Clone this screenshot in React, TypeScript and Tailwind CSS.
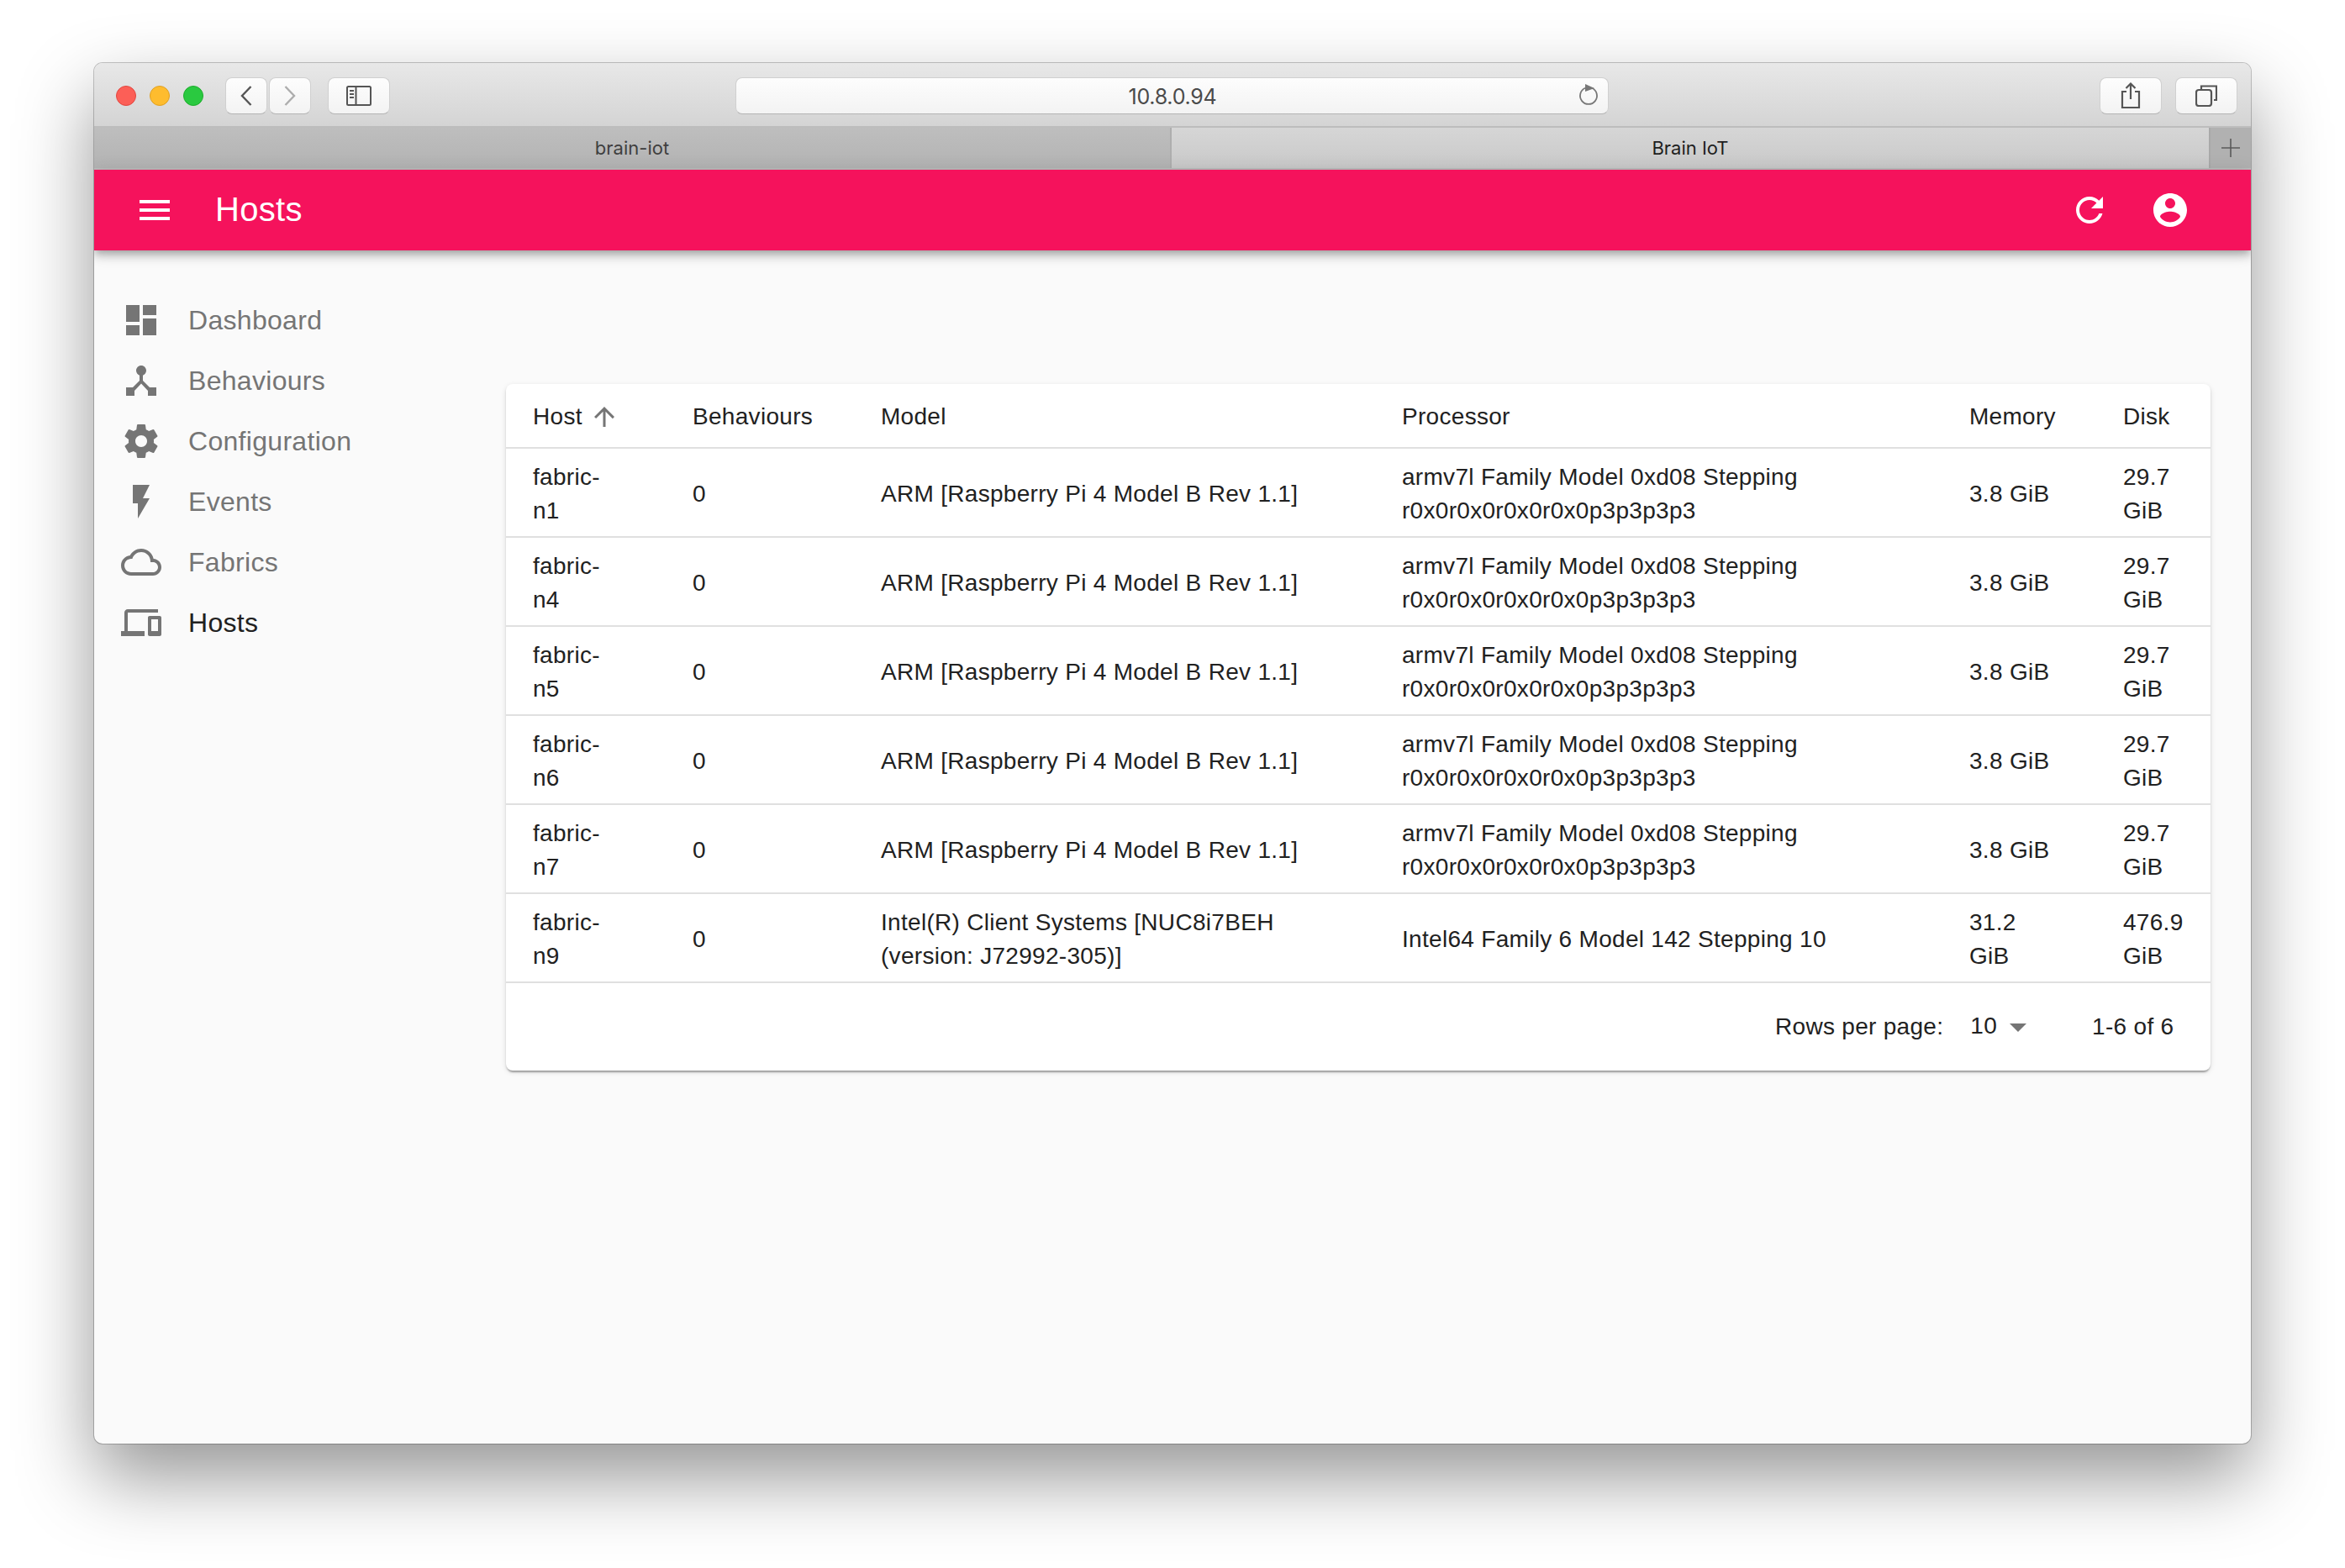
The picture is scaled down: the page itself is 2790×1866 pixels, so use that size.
import React from "react";

const P = {
  dashboard: "M3 13h8V3H3v10zm0 8h8v-6H3v6zm10 0h8V11h-8v10zm0-18v6h8V3h-8z",
  hub: "M17 16l-4-4V8.82C14.16 8.4 15 7.3 15 6c0-1.66-1.34-3-3-3S9 4.34 9 6c0 1.3.84 2.4 2 2.82V12l-4 4H3v5h5v-3.05l4-4.2 4 4.2V21h5v-5h-4z",
  settings: "M19.43 12.98c.04-.32.07-.64.07-.98s-.03-.66-.07-.98l2.11-1.65c.19-.15.24-.42.12-.64l-2-3.46c-.12-.22-.39-.3-.61-.22l-2.49 1c-.52-.4-1.08-.73-1.69-.98l-.38-2.65C14.46 2.18 14.25 2 14 2h-4c-.25 0-.46.18-.49.42l-.38 2.65c-.61.25-1.17.59-1.69.98l-2.49-1c-.23-.09-.49 0-.61.22l-2 3.46c-.13.22-.07.49.12.64l2.11 1.65c-.04.32-.07.65-.07.98s.03.66.07.98l-2.11 1.65c-.19.15-.24.42-.12.64l2 3.46c.12.22.39.3.61.22l2.49-1c.52.4 1.08.73 1.69.98l.38 2.65c.03.24.24.42.49.42h4c.25 0 .46-.18.49-.42l.38-2.65c.61-.25 1.17-.59 1.69-.98l2.49 1c.23.09.49 0 .61-.22l2-3.46c.12-.22.07-.49-.12-.64l-2.11-1.65zM12 15.5c-1.93 0-3.5-1.57-3.5-3.5s1.57-3.5 3.5-3.5 3.5 1.57 3.5 3.5-1.57 3.5-3.5 3.5z",
  flash: "M7 2v11h3v9l7-12h-4l4-8z",
  cloud: "M19.35 10.04C18.67 6.59 15.64 4 12 4 9.11 4 6.6 5.64 5.35 8.04 2.34 8.36 0 10.91 0 14c0 3.31 2.69 6 6 6h13c2.76 0 5-2.24 5-5 0-2.64-2.05-4.78-4.65-4.96zM19 18H6c-2.21 0-4-1.79-4-4s1.79-4 4-4h.71C7.37 7.69 9.48 6 12 6c3.04 0 5.5 2.46 5.5 5.5v.5H19c1.66 0 3 1.34 3 3s-1.34 3-3 3z",
  devices: "M4 6h18V4H4c-1.1 0-2 .9-2 2v11H0v3h14v-3H4V6zm19 2h-6c-.55 0-1 .45-1 1v10c0 .55.45 1 1 1h6c.55 0 1-.45 1-1V9c0-.55-.45-1-1-1zm-1 9h-4v-7h4v7z",
  refresh: "M17.65 6.35C16.2 4.9 14.21 4 12 4c-4.42 0-7.99 3.58-7.99 8s3.57 8 7.99 8c3.73 0 6.84-2.55 7.73-6h-2.08c-.82 2.33-3.04 4-5.65 4-3.31 0-6-2.69-6-6s2.69-6 6-6c1.66 0 3.14.69 4.22 1.78L13 11h7V4l-2.35 2.35z",
  account: "M12 2C6.48 2 2 6.48 2 12s4.48 10 10 10 10-4.48 10-10S17.52 2 12 2zm0 3c1.66 0 3 1.34 3 3s-1.34 3-3 3-3-1.34-3-3 1.34-3 3-3zm0 14.2c-2.5 0-4.71-1.28-6-3.22.03-1.99 4-3.08 6-3.08 1.99 0 5.97 1.09 6 3.08-1.29 1.94-3.5 3.22-6 3.22z",
  menu: "M3 18h18v-2H3v2zm0-5h18v-2H3v2zm0-7v2h18V6H3z",
  up: "M4 12l1.41 1.41L11 7.83V20h2V7.83l5.58 5.59L20 12l-8-8-8 8z",
  drop: "M7 10l5 5 5-5z",
};

function Icon({ d, className }: { d: string; className: string }) {
  return (
    <svg viewBox="0 0 24 24" className={className} fill="currentColor">
      <path d={d} />
    </svg>
  );
}

function ToolBtn({ className, children }: { className: string; children: React.ReactNode }) {
  return (
    <div className={"flex h-[44px] items-center justify-center rounded-[8px] border border-[#d0d0d0] border-b-[#b4b4b4] bg-gradient-to-b from-[#fdfdfd] to-[#f3f3f3] " + className}>
      {children}
    </div>
  );
}

const nav = [
  { label: "Dashboard", d: P.dashboard },
  { label: "Behaviours", d: P.hub },
  { label: "Configuration", d: P.settings },
  { label: "Events", d: P.flash },
  { label: "Fabrics", d: P.cloud },
  { label: "Hosts", d: P.devices, active: true },
];

const PI = "ARM [Raspberry Pi 4 Model B Rev 1.1]";
const ARM = ["armv7l Family Model 0xd08 Stepping", "r0x0r0x0r0x0r0x0p3p3p3p3"];
const rows = [
  { host: "n1", model: [PI], proc: ARM, mem: ["3.8 GiB"], disk: ["29.7", "GiB"] },
  { host: "n4", model: [PI], proc: ARM, mem: ["3.8 GiB"], disk: ["29.7", "GiB"] },
  { host: "n5", model: [PI], proc: ARM, mem: ["3.8 GiB"], disk: ["29.7", "GiB"] },
  { host: "n6", model: [PI], proc: ARM, mem: ["3.8 GiB"], disk: ["29.7", "GiB"] },
  { host: "n7", model: [PI], proc: ARM, mem: ["3.8 GiB"], disk: ["29.7", "GiB"] },
  {
    host: "n9",
    model: ["Intel(R) Client Systems [NUC8i7BEH", "(version: J72992-305)]"],
    proc: ["Intel64 Family 6 Model 142 Stepping 10"],
    mem: ["31.2", "GiB"],
    disk: ["476.9", "GiB"],
  },
];

function Cell({ lines }: { lines: string[] }) {
  return (
    <td className="h-[106px] border-b-2 border-[#e0e0e0] pl-[32px] pt-[3px] align-middle">
      {lines.map((l) => (
        <div key={l} className="whitespace-nowrap">{l}</div>
      ))}
    </td>
  );
}

function Th({ children }: { children: React.ReactNode }) {
  return <th className="h-[76px] border-b-2 border-[#e0e0e0] pl-[32px] pt-[3px] text-left font-normal">{children}</th>;
}

export default function App() {
  return (
    <div className="h-[1866px] w-[2790px] overflow-hidden bg-white pl-[112px] pt-[75px] font-['Liberation_Sans',Arial,sans-serif]">
      <div className="flex h-[1643px] w-[2566px] flex-col overflow-hidden rounded-[10px] bg-[#fafafa] shadow-[0_40px_90px_rgba(0,0,0,0.42),0_0_0_1px_rgba(0,0,0,0.22)]">
        {/* Title bar */}
        <div className="flex h-[77px] shrink-0 items-center border-b-2 border-[#bdbdbd] bg-gradient-to-b from-[#e8e8e8] to-[#d4d4d4] pl-[26px] pt-[3px]">
          <div className="h-[24px] w-[24px] rounded-full border border-[#e2463f] bg-[#fc5f57]" />
          <div className="ml-[16px] h-[24px] w-[24px] rounded-full border border-[#dfa023] bg-[#febc2e]" />
          <div className="ml-[16px] h-[24px] w-[24px] rounded-full border border-[#1dad2b] bg-[#2ac940]" />
          <ToolBtn className="ml-[26px] w-[50px]">
            <svg viewBox="0 0 14 24" className="h-[24px] w-[14px]" fill="none" stroke="#555" strokeWidth="2.4"><path d="M12.5 1 2 12l10.5 11" /></svg>
          </ToolBtn>
          <ToolBtn className="ml-[2px] w-[50px]">
            <svg viewBox="0 0 14 24" className="h-[24px] w-[14px]" fill="none" stroke="#adadad" strokeWidth="2.4"><path d="M1.5 1 12 12 1.5 23" /></svg>
          </ToolBtn>
          <ToolBtn className="ml-[20px] w-[74px]">
            <svg viewBox="0 0 30 24" className="h-[24px] w-[30px]" fill="none" stroke="#555" strokeWidth="2">
              <rect x="1" y="1" width="28" height="22" rx="1.5" />
              <path d="M11.5 1v22M4 6h5M4 10h5M4 14h5" />
            </svg>
          </ToolBtn>
          <ToolBtn className="relative ml-[411px] w-[1039px]">
            <span className="mt-[3px] ml-[1px] font-['Inter',sans-serif] text-[25px] text-[#4a4a4a] tracking-[-0.25px]">10.8.0.94</span>
            <svg viewBox="0 0 24 28" className="absolute right-[11px] top-[5px] h-[28px] w-[24px]" fill="none" stroke="#777" strokeWidth="1.8">
              <path d="M8 6.800A10 10 0 1 0 16 6.800" />
              <path d="M8 2 19 7 8 11z" fill="#777" stroke="none" />
            </svg>
          </ToolBtn>
          <ToolBtn className="ml-[584px] w-[74px]">
            <svg viewBox="0 0 24 32" className="h-[32px] w-[24px]" fill="none" stroke="#555" strokeWidth="2.2">
              <path d="M7 11H2v19h20V11h-5M12 20V2M6.500 7 12 1.500 17.500 7" />
            </svg>
          </ToolBtn>
          <ToolBtn className="ml-[16px] w-[74px]">
            <svg viewBox="0 0 26 26" className="h-[26px] w-[26px]" fill="none" stroke="#555" strokeWidth="2.2">
              <rect x="1" y="6" width="18" height="19" rx="3" />
              <path d="M7 5V1.500h18V18h-3" />
            </svg>
          </ToolBtn>
        </div>

        {/* Tabs */}
        <div className="flex h-[50px] shrink-0 border-b-2 border-[#bdbdbd] font-['Inter',sans-serif] text-[22px]">
          <div className="flex w-[1282px] items-center justify-center border-r-2 border-[#aeaeae] bg-gradient-to-b from-[#bebebe] to-[#b3b3b3] text-[#3f3f3f]">brain-iot</div>
          <div className="flex flex-1 items-center justify-center bg-gradient-to-b from-[#d6d6d6] to-[#c9c9c9] text-[#1e1e1e]">Brain IoT</div>
          <div className="flex w-[50px] items-center justify-center border-l-2 border-[#a9a9a9] bg-[#b1b1b1]">
            <svg viewBox="0 0 22 22" className="h-[22px] w-[22px]" stroke="#5a5a5a" strokeWidth="1.6"><path d="M11 0v22M0 11h22" /></svg>
          </div>
        </div>

        {/* App bar */}
        <div className="z-10 flex h-[96px] shrink-0 items-center bg-[#f5125c] pl-[48px] pr-[72px] text-white shadow-[0_4px_8px_-2px_rgba(0,0,0,0.2),0_8px_10px_0_rgba(0,0,0,0.14),0_2px_20px_0_rgba(0,0,0,0.12)]">
          <Icon d={P.menu} className="h-[48px] w-[48px]" />
          <div className="-mt-[2px] ml-[48px] text-[40px] tracking-[0.3px]">Hosts</div>
          <div className="ml-auto flex items-center gap-[48px]">
            <Icon d={P.refresh} className="h-[48px] w-[48px]" />
            <Icon d={P.account} className="h-[48px] w-[48px]" />
          </div>
        </div>

        {/* Body */}
        <div className="flex flex-1">
          <nav className="w-[490px] shrink-0 pt-[47px]">
            {nav.map((n) => (
              <div key={n.label} className="flex h-[72px] items-center pl-[32px]">
                <Icon d={n.d} className="h-[48px] w-[48px] text-[#757575]" />
                <span className={"ml-[32px] text-[32px] tracking-[0.3px] " + (n.active ? "text-[#212121]" : "text-[#757575]")}>{n.label}</span>
              </div>
            ))}
          </nav>
          <main className="flex-1 pt-[159px]">
            <div className="w-[2028px] rounded-[8px] bg-white text-[28px] leading-[40px] tracking-[0.3px] text-[#212121] shadow-[0_4px_2px_-2px_rgba(0,0,0,0.2),0_2px_2px_0_rgba(0,0,0,0.14),0_2px_6px_0_rgba(0,0,0,0.12)]">
              <table className="w-full table-fixed">
                <colgroup>
                  <col className="w-[190px]" />
                  <col className="w-[224px]" />
                  <col className="w-[620px]" />
                  <col className="w-[675px]" />
                  <col className="w-[183px]" />
                  <col className="w-[136px]" />
                </colgroup>
                <thead>
                  <tr>
                    <Th>
                      <span className="flex items-center">
                        Host
                        <Icon d={P.up} className="ml-[8px] h-[36px] w-[36px] text-[#757575]" />
                      </span>
                    </Th>
                    <Th>Behaviours</Th>
                    <Th>Model</Th>
                    <Th>Processor</Th>
                    <Th>Memory</Th>
                    <Th>Disk</Th>
                  </tr>
                </thead>
                <tbody>
                  {rows.map((r) => (
                    <tr key={r.host}>
                      <Cell lines={["fabric-", r.host]} />
                      <Cell lines={["0"]} />
                      <Cell lines={r.model} />
                      <Cell lines={r.proc} />
                      <Cell lines={r.mem} />
                      <Cell lines={r.disk} />
                    </tr>
                  ))}
                </tbody>
              </table>
              <div className="flex h-[104px] items-center pl-[1510px]">
                <span className="whitespace-nowrap">Rows per page:</span>
                <span className="ml-[32px] whitespace-nowrap leading-none -mt-[3px]">10</span>
                <Icon d={P.drop} className="ml-[1px] h-[48px] w-[48px] text-[#757575]" />
                <span className="ml-[64px] whitespace-nowrap">1-6 of 6</span>
              </div>
            </div>
          </main>
        </div>
      </div>
    </div>
  );
}
